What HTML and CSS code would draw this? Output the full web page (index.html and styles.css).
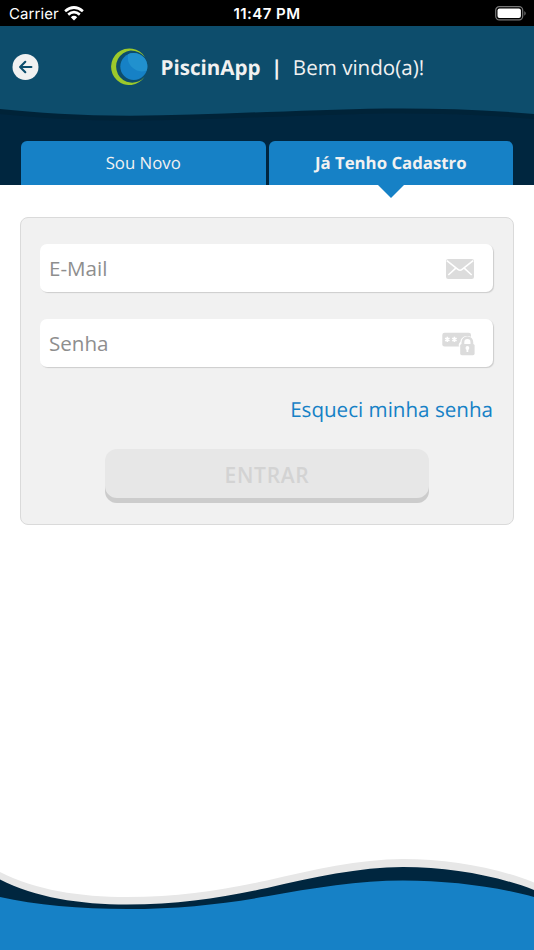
FILE: index.html
```html
<!DOCTYPE html>
<html lang="pt-BR">
<head>
<meta charset="utf-8">
<title>PiscinApp</title>
<link rel="stylesheet" href="styles.css">
</head>
<body>
<div class="app">
  <div class="status">
    <div class="carrier"><span>Carrier</span>
      <svg width="20" height="15" viewBox="0 0 20 15" fill="none" stroke="#fff" stroke-width="2.7"><path d="M1.1 5.2Q10-2.2 18.9 5.2M4.2 8.6Q10 3.8 15.8 8.6"/><path d="M10 14.4 6.8 11.2Q10 8.4 13.2 11.2Z" fill="#fff" stroke="none"/></svg>
    </div>
    <span class="clock">11:47 PM</span>
    <svg class="battery" width="32" height="15" viewBox="0 0 32 15"><rect x=".7" y=".7" width="27" height="13.2" rx="3.6" fill="none" stroke="#777" stroke-width="1.2"/><rect x="2.5" y="2.5" width="23.4" height="9.6" rx="2" fill="#fff"/><path d="M29.4 5.1q2.6 2.3 0 4.6z" fill="#777"/></svg>
  </div>
  <header class="header">
    <svg class="header-wave" width="534" height="96" viewBox="0 0 534 96"><path d="M0 0H534V93C490 89 445 87.5 403 87.5C355 87.5 315 89.5 267 91C220 92.5 175 94.7 130 94.7C80 94.7 35 91.5 0 88Z" fill="#002338"/><path d="M0 0H534V88C490 84 445 82.5 403 82.5C355 82.5 315 84.5 267 86C220 87.5 175 89.7 130 89.7C80 89.7 35 86.5 0 83Z" fill="#0d4d6c"/></svg>
    <div class="title-row">
      <button class="back" aria-label="Voltar"><svg width="27" height="26" viewBox="-.5 0 27 26"><circle cx="13" cy="13" r="13" fill="#f1f1f1"/><path d="M18.9 13H7.8M12.8 7.8 7.6 13l5.2 5.2" fill="none" stroke="#0d4d6c" stroke-width="2.1" stroke-linecap="round" stroke-linejoin="round"/></svg></button>
      <svg class="logo" width="38" height="38" viewBox="0 0 38 38"><path d="M35 10.2A18.3 18.3 0 1 0 34.5 30A16.1 16.1 0 1 1 20.5 3.6Q29 3.4 35 10.2Z" fill="#9cc92b"/><circle cx="23.8" cy="19.5" r="13.5" fill="#1681c6"/><path d="M23 6A13.5 13.5 0 0 1 36.8 23.4A14 14 0 0 1 18.2 7.2Q20 6 23 6Z" fill="#2191ce"/></svg>
      <b class="brand">PiscinApp</b><b class="bar">|</b><span class="welcome">Bem vindo(a)!</span>
    </div>
    <nav class="tabs">
      <a class="tab">Sou Novo</a>
      <a class="tab active">Já Tenho Cadastro</a>
    </nav>
  </header>
  <main class="main">
    <form class="card">
      <label class="field mail"><input type="text" placeholder="E-Mail">
        <svg width="28" height="20" viewBox="0 0 28 20"><rect width="28" height="20" rx="2.2" fill="#dcdcdc"/><path d="M.8 1.6 11.9 10.4Q14 12 16.1 10.4L27.2 1.6M2.3 16 9.8 9.2M25.7 16 18.2 9.2" fill="none" stroke="#fff" stroke-width="1.6"/></svg>
      </label>
      <label class="field"><input type="text" placeholder="Senha">
        <svg width="33" height="24" viewBox="0 0 33 24"><rect x=".3" y=".8" width="28.7" height="13.7" rx="2.2" fill="#dcdcdc"/><path d="M5.3 4.8V10M3.1 6.1 7.5 8.7M7.5 6.1 3.1 8.7M12.4 4.8V10M10.2 6.1 14.6 8.7M14.6 6.1 10.2 8.7" stroke="#fff" stroke-width="1.6"/><path d="M16.8 14.8V12Q18 10.2 18.5 9.5C19 2 31.5 2 32 9.5L33 12V15Z" fill="#fff"/><path d="M20.9 13V10.4a4.5 4.7 0 0 1 9 0V13" fill="none" stroke="#dcdcdc" stroke-width="2.8"/><rect x="18.2" y="12" width="14.4" height="11.2" rx="1.6" fill="#dcdcdc"/><circle cx="25.4" cy="16" r="1.9" fill="#fff"/><path d="M24.5 16h1.8v4h-1.8z" fill="#fff"/></svg>
      </label>
      <a class="forgot">Esqueci minha senha</a>
      <button class="enter" type="button" disabled>ENTRAR</button>
    </form>
  </main>
  <svg class="footer-wave" width="534" height="92" viewBox="0 858 534 92"><path d="M0 872C35 890 80 897 127 897C180 897 222 890 267 880.5C312 870 360 859 403 859C450 859 498 868 534 882.5V950H0Z" fill="#e7e7e7"/><path d="M0 879.5C35 897.5 80 904.5 127 904.5C180 904.5 222 897.5 267 888C312 877.5 360 867 403 867C450 867 498 876 534 890V950H0Z" fill="#00263f"/><path d="M0 897C35 905 80 909 127 909C180 909 222 904 267 896.3C312 888 360 880.5 403 880.5C450 880.5 498 887 534 897V950H0Z" fill="#1681c6"/></svg>
</div>
</body>
</html>
```
FILE: styles.css
```css
* { box-sizing: border-box; }
body { margin: 0; background: #fff; font-family: "Open Sans", sans-serif; text-rendering: geometricPrecision; }
.app { width: 534px; height: 950px; display: flex; flex-direction: column; overflow: hidden; }
.status {
  height: 26px; flex: none; background: #000; color: #fff;
  display: grid; grid-template-columns: 1fr auto 1fr; align-items: center;
  padding: 0 7px 0 9px; font: 15px/26px Inter, sans-serif;
}
.carrier { display: flex; align-items: center; gap: 5px; padding-top: 1px; }
.carrier span { letter-spacing: .1px; }
.carrier svg { margin-top: -2px; }
.clock { font-weight: 600; padding-top: 1px; letter-spacing: .45px; margin-right: 2px; }
.battery { justify-self: end; }
.header {
  height: 159px; flex: none; position: relative; background: #00263f;
  display: flex; flex-direction: column; justify-content: space-between;
}
.header-wave { position: absolute; left: 0; top: 0; }
.title-row {
  position: relative; height: 82px; display: flex; align-items: center;
  padding-left: 12px; color: #f1f1f1; font-size: 20.6px; line-height: 28px; white-space: nowrap;
}
.title-row b, .title-row span { padding-top: 2px; }
.back { width: 27px; height: 26px; padding: 0; border: 0; background: none; }
.back svg { display: block; }
.logo { margin: -2px 0 0 71px; }
.brand { width: 100px; margin-left: 12.5px; }
.bar { margin-left: 10.5px; }
.welcome { margin-left: 10.5px; }
.tabs { position: relative; display: flex; gap: 3px; padding: 0 21px; }
.tab {
  position: relative; flex: 1; height: 44px; border-radius: 6px 6px 0 0;
  background: #1681c6; color: #f1f1f1; font-size: 16.8px; line-height: 43px; text-align: center;
}
.active { font-weight: 700; }
.active::after {
  content: ""; position: absolute; top: 44px; left: 50%; margin-left: -13px;
  border: 13px solid transparent; border-top-color: #1681c6; border-bottom: 0;
}
.main { flex: 1; padding: 32px 20px 0; }
.card {
  height: 308px; padding: 26px 20px 0 19px; border: 1px solid #dadada; border-radius: 8px;
  background: #f1f1f1; display: flex; flex-direction: column;
}
.field {
  height: 48px; margin-bottom: 27px; display: flex; align-items: center;
  background: #fff; border-radius: 7px; box-shadow: 1px 1px 1px #ccc; padding: 0 18px 0 9px;
}
.mail { padding-right: 19px; }
.field svg { margin-top: 1px; }
.field input {
  flex: 1; min-width: 0; border: 0; padding: 0; background: none; outline: 0;
  font: 20.6px "Open Sans", sans-serif; color: #555;
}
.field input::placeholder { color: #8e8e8e; opacity: 1; }
.forgot { align-self: flex-end; font-size: 20.6px; line-height: 28px; margin-top: 2px; color: #1681c6; }
.enter {
  width: 324px; height: 54px; margin: 25px auto 0; padding: 0 0 3px; border: 0; border-radius: 12px;
  position: relative; left: .5px;
  background: #e7e7e7; box-shadow: inset 0 -5px #ccc;
  color: #d3d3d3; font: 600 21px "Open Sans", sans-serif; letter-spacing: .7px;
}
.footer-wave { display: block; flex: none; }
```
